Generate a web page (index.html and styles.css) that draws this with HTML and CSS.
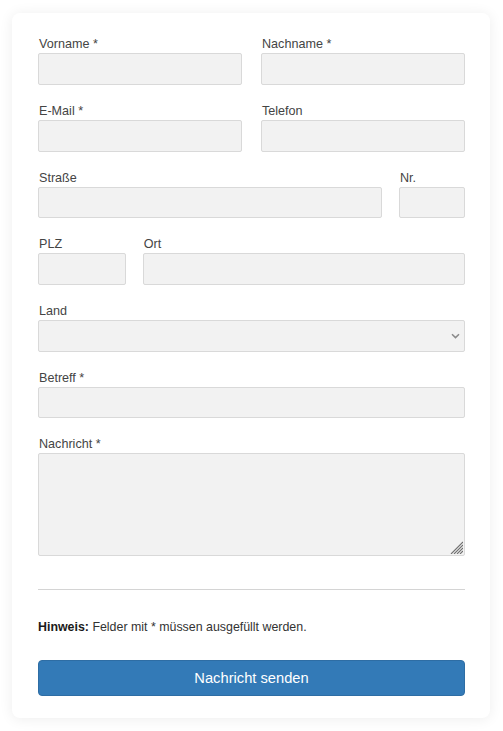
FILE: index.html
```html
<!DOCTYPE html>
<html lang="de">
<head>
<meta charset="utf-8">
<title>Kontakt</title>
<link rel="stylesheet" href="styles.css">
</head>
<body>
<form class="card">
  <div class="row row-half">
    <div class="field"><label class="label">Vorname *</label><input class="input" type="text"></div>
    <div class="field"><label class="label">Nachname *</label><input class="input" type="text"></div>
  </div>
  <div class="row row-half">
    <div class="field"><label class="label">E-Mail *</label><input class="input" type="email"></div>
    <div class="field"><label class="label">Telefon</label><input class="input" type="tel"></div>
  </div>
  <div class="row row-street">
    <div class="field"><label class="label">Straße</label><input class="input" type="text"></div>
    <div class="field"><label class="label">Nr.</label><input class="input" type="text"></div>
  </div>
  <div class="row row-city">
    <div class="field"><label class="label">PLZ</label><input class="input" type="text"></div>
    <div class="field"><label class="label">Ort</label><input class="input" type="text"></div>
  </div>
  <div class="row">
    <div class="field">
      <label class="label">Land</label>
      <div class="control">
        <select class="input select"><option></option></select>
        <svg class="chevron" width="9" height="6" viewBox="0 0 9 6" aria-hidden="true"><path d="M1 1.2 L4.5 4.6 L8 1.2" fill="none" stroke="#8a8a8a" stroke-width="1.5"/></svg>
      </div>
    </div>
  </div>
  <div class="row">
    <div class="field"><label class="label">Betreff *</label><input class="input" type="text"></div>
  </div>
  <div class="row">
    <div class="field">
      <label class="label">Nachricht *</label>
      <div class="control">
        <textarea class="input textarea"></textarea>
        <svg class="grip" width="13" height="13" viewBox="0 0 13 13" aria-hidden="true">
          <g stroke="#6f6f6f" stroke-width="1.1">
            <line x1="13" y1="1" x2="1" y2="13"/>
            <line x1="13" y1="4" x2="4" y2="13"/>
            <line x1="13" y1="7" x2="7" y2="13"/>
            <line x1="13" y1="10" x2="10" y2="13"/>
          </g>
        </svg>
      </div>
    </div>
  </div>
  <hr class="divider">
  <p class="hint"><strong>Hinweis:</strong> Felder mit * müssen ausgefüllt werden.</p>
  <button class="submit" type="button">Nachricht senden</button>
</form>
</body>
</html>
```

FILE: styles.css
```css
* { box-sizing: border-box; }
html, body { margin: 0; padding: 0; background: #ffffff; }
body {
  font-family: "Liberation Sans", Arial, sans-serif;
  padding: 13px 13px 13px 12px;
}
.card {
  display: flex;
  flex-direction: column;
  background: #ffffff;
  border-radius: 8px;
  box-shadow: 0 1px 14px rgba(0, 0, 0, 0.075);
  padding: 23.3px 25px 22px 26px;
}
.row {
  display: grid;
  grid-template-columns: 1fr;
  margin-bottom: 18px;
}
.row-half { grid-template-columns: 1fr 1fr; column-gap: 19px; }
.row-street { grid-template-columns: 1fr 66px; column-gap: 17px; }
.row-city { grid-template-columns: 88px 1fr; column-gap: 16.7px; }
.field { display: flex; flex-direction: column; min-width: 0; }
.control { position: relative; }
.label {
  display: block;
  font-size: 12.6px;
  line-height: 17px;
  color: #444;
  padding-left: 1px;
  margin-bottom: 0;
}
.input {
  display: block;
  width: 100%;
  height: 31.67px;
  margin: 0;
  background: #f2f2f2;
  border: 1px solid #d9d9d9;
  border-radius: 2px;
  font-family: "Liberation Sans", Arial, sans-serif;
  font-size: 13px;
  color: #333;
  padding: 4px 8px;
}
.select {
  -webkit-appearance: none;
  appearance: none;
  padding: 4px 24px 4px 6px;
}
.chevron {
  position: absolute;
  right: 5px;
  top: 13px;
  pointer-events: none;
}
.textarea { height: 102.5px; resize: none; }
.grip {
  position: absolute;
  right: 2px;
  bottom: 2px;
  pointer-events: none;
}
.divider {
  width: 100%;
  margin: 15px 0 0;
  border: 0;
  border-top: 1px solid #d4d4d4;
  height: 0;
}
.hint {
  margin: 30px 0 0;
  font-size: 12.4px;
  line-height: 15px;
  color: #333;
}
.hint strong { color: #1a1a1a; }
.submit {
  margin-top: 25.3px;
  height: 35.7px;
  width: 100%;
  border: 1px solid #2e6da4;
  border-radius: 4px;
  background: #337ab7;
  color: #ffffff;
  font-family: "Liberation Sans", Arial, sans-serif;
  font-size: 14.7px;
  cursor: pointer;
}
```
